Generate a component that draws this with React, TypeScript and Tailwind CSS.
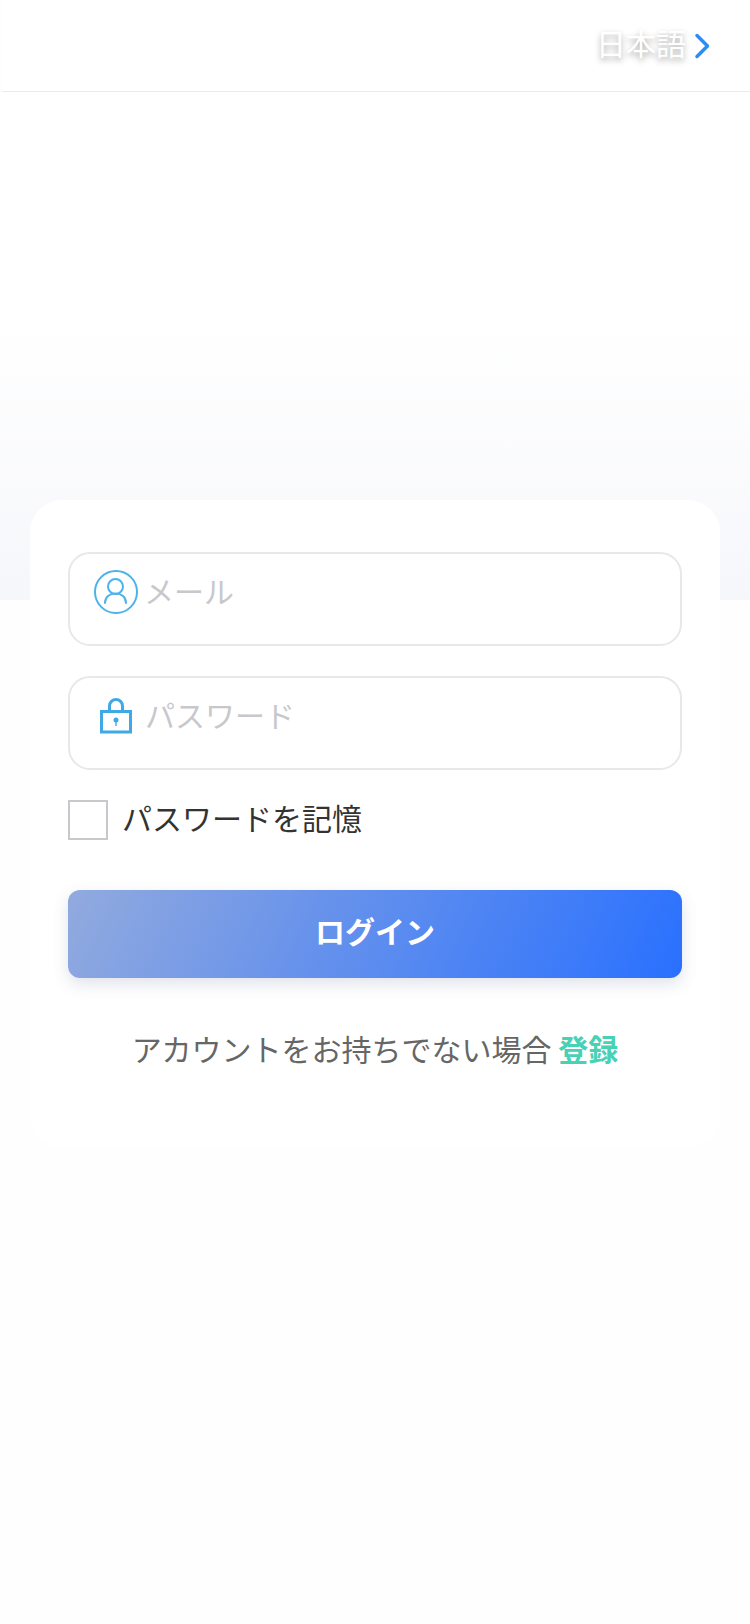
const UserIcon = () => (
  <svg width="44" height="44" viewBox="0 0 44 44" fill="none" stroke="#4db2ea" strokeWidth="2">
    <circle cx="22" cy="22" r="21" />
    <circle cx="21.500" cy="16.500" r="7.500" />
    <path d="M11 33c0-6 4.500-9.500 10.500-9.500S32 27 32 33" strokeLinecap="round" />
  </svg>
)

const LockIcon = () => (
  <svg width="34" height="36" viewBox="0 0 34 36" fill="none">
    <path d="M9.500 12V8a6.500 6.500 0 0 1 13 0v4" stroke="#3fa9e6" strokeWidth="3" />
    <rect x="1.500" y="13.500" width="29" height="20.500" stroke="#3fa9e6" strokeWidth="3" />
    <circle cx="16" cy="22" r="2.500" fill="#3fa9e6" />
    <rect x="15.300" y="23" width="1.400" height="5" fill="#3fa9e6" />
  </svg>
)

const App = () => {
  return (
    <div className="w-[750px] h-[1624px] bg-[#fefefe] overflow-hidden font-['Noto_Sans_CJK_JP','Noto_Sans',sans-serif]">
      <div className="h-[92px] ml-[2px] border-b border-[#ebebeb] bg-white flex items-center justify-end pr-[39px] pb-[7px]">
        <span className="text-[30px] leading-[40px] text-white [text-shadow:0_3px_6px_rgba(0,0,0,0.35)]">日本語</span>
        <svg className="ml-[7px] mt-[7px]" width="18" height="26" viewBox="0 0 18 26" fill="none">
          <path d="M4 2.500l10.500 10.500L4 23.500" stroke="#2b8cf5" strokeWidth="3.500" strokeLinecap="round" strokeLinejoin="round" />
        </svg>
      </div>

      <div className="h-[508px] bg-linear-to-b from-white from-[45%] to-[#f6f7fb]" />

      <div className="relative -mt-[100px] mx-[30px] h-[648px] bg-white rounded-[32px] px-[38px] pt-[52px]">
        <div className="flex flex-col gap-[30px]">
          <div className="h-[94px] border-2 border-[#e8e8e8] rounded-[22px] flex items-start pl-[24px] pt-[16px] gap-[6px]">
            <UserIcon />
            <span className="text-[30px] leading-[44px] text-[#c8c8cc] -mt-[2px]">メール</span>
          </div>
          <div className="h-[94px] border-2 border-[#e8e8e8] rounded-[22px] flex items-start pl-[30px] pt-[20px] gap-[11px]">
            <LockIcon />
            <span className="text-[30px] leading-[34px] text-[#c8c8cc] -mt-[1px]">パスワード</span>
          </div>
        </div>

        <div className="flex items-center mt-[30px] gap-[14px]">
          <div className="w-[40px] h-[40px] border-2 border-[#c8c8cc] bg-white" />
          <span className="text-[30px] leading-[40px] text-[#333333] -mt-[6px]">パスワードを記憶</span>
        </div>

        <button className="mt-[50px] w-full h-[88px] pb-[8px] rounded-[12px] bg-linear-[115deg] from-[#92aade] to-[#2970ff] shadow-[0_6px_16px_rgba(60,80,130,0.16)] text-white text-[30px] font-bold flex items-center justify-center">
          ログイン
        </button>

        <p className="mt-[48px] text-center text-[30px] leading-[44px] text-[#666666]">
          アカウントをお持ちでない場合 <span className="font-bold text-[#48d1b4]">登録</span>
        </p>
      </div>
    </div>
  )
}

export default App
